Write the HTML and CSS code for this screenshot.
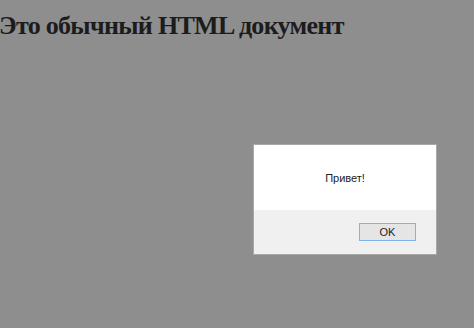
FILE: index.html
```html
<!DOCTYPE html>
<html>
<head>
    <title>Alert</title>
    <link rel="stylesheet" href="styles.css">
</head>
<body>
    <h1 class="title">Это обычный HTML документ</h1>
    <div class="page">
        <div class="dialog">
            <div class="dialog-body">Привет!</div>
            <div class="dialog-footer">
                <button class="ok-button">OK</button>
            </div>
        </div>
    </div>
</body>
</html>
```
FILE: styles.css
```css
body {
    margin: 0;
    padding: 0;
    background-color: #8e8e8e;
    font-family: "Liberation Serif", serif;
    height: 328px;
    overflow: hidden;
}

.title {
    font-size: 26px;
    font-weight: bold;
    letter-spacing: -0.7px;
    color: #1c1c1c;
    margin: 0 0 0 -1px;
    padding: 11px 0 0 0;
    line-height: 30px;
}

.page {
    display: flex;
    justify-content: flex-end;
    padding: 103px 37px 0 0;
}

.dialog {
    width: 182px;
    border: 1px solid #a8a8a8;
    background-color: #fff;
    font-family: "Liberation Sans", Arial, sans-serif;
}

.dialog-body {
    height: 65px;
    display: flex;
    align-items: center;
    justify-content: center;
    font-size: 11px;
    color: #222;
}

.dialog-footer {
    background-color: #f0f0f0;
    height: 44px;
    display: flex;
    align-items: center;
    justify-content: flex-end;
    padding-right: 20px;
}

.ok-button {
    width: 57px;
    height: 18px;
    border: 1px solid #7eb4ea;
    background-color: #e5e5e5;
    font-family: "Liberation Sans", Arial, sans-serif;
    font-size: 11px;
    color: #222;
    padding: 0;
}
```
